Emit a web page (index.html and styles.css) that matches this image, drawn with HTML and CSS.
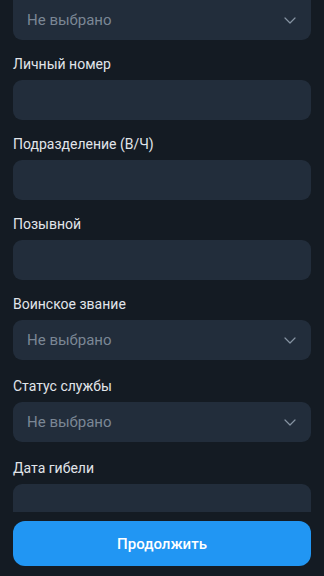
FILE: index.html
```html
<!DOCTYPE html>
<html lang="ru">
<head>
    <meta charset="UTF-8">
    <meta name="viewport" content="width=device-width, initial-scale=1.0">
    <title>Анкета</title>
    <link rel="stylesheet" href="styles.css">
</head>
<body>
    <div class="screen">
        <div class="scroll">
            <form class="form">
                <div class="form-group">
                    <div class="select select-cut">
                        <span class="placeholder">Не выбрано</span>
                        <svg class="chevron" width="12" height="7" viewBox="0 0 12 7"><path d="M1 1l5 5 5-5" fill="none" stroke="currentColor" stroke-width="1.2" stroke-linecap="round" stroke-linejoin="round"/></svg>
                    </div>
                </div>
                <div class="form-group">
                    <label class="label">Личный номер</label>
                    <div class="input"></div>
                </div>
                <div class="form-group">
                    <label class="label">Подразделение (В/Ч)</label>
                    <div class="input"></div>
                </div>
                <div class="form-group">
                    <label class="label">Позывной</label>
                    <div class="input"></div>
                </div>
                <div class="form-group form-group-select">
                    <label class="label">Воинское звание</label>
                    <div class="select">
                        <span class="placeholder">Не выбрано</span>
                        <svg class="chevron" width="12" height="7" viewBox="0 0 12 7"><path d="M1 1l5 5 5-5" fill="none" stroke="currentColor" stroke-width="1.2" stroke-linecap="round" stroke-linejoin="round"/></svg>
                    </div>
                </div>
                <div class="form-group form-group-select">
                    <label class="label">Статус службы</label>
                    <div class="select">
                        <span class="placeholder">Не выбрано</span>
                        <svg class="chevron" width="12" height="7" viewBox="0 0 12 7"><path d="M1 1l5 5 5-5" fill="none" stroke="currentColor" stroke-width="1.2" stroke-linecap="round" stroke-linejoin="round"/></svg>
                    </div>
                </div>
                <div class="form-group">
                    <label class="label">Дата гибели</label>
                    <div class="input"></div>
                </div>
            </form>
        </div>
        <div class="footer">
            <button type="button" class="btn">Продолжить</button>
        </div>
    </div>
</body>
</html>
```

FILE: styles.css
```css
* {
    box-sizing: border-box;
}

html, body {
    margin: 0;
    height: 100%;
}

body {
    background-color: #141b23;
    font-family: Roboto, "Noto Sans", sans-serif;
    color: #e3e7eb;
}

.screen {
    height: 576px;
    display: flex;
    flex-direction: column;
    overflow: hidden;
}

.scroll {
    height: 512px;
    overflow: hidden;
    padding: 0 13px;
}

.form-group {
    margin-bottom: 14px;
}

.form-group-select {
    margin-bottom: 16px;
}

.label {
    display: block;
    font-size: 14px;
    line-height: 20px;
    margin-bottom: 6px;
    color: #e1e5ea;
}

.input,
.select {
    height: 40px;
    background-color: #222d3b;
    border-radius: 9px;
}

.select {
    display: flex;
    align-items: center;
    justify-content: space-between;
    padding: 0 15px 0 14px;
}

.select-cut {
    border-radius: 0 0 9px 9px;
}

.placeholder {
    font-size: 15px;
    color: #7b8795;
}

.chevron {
    color: #8693a2;
}

.footer {
    flex: 1;
    padding: 9px 13px 0;
    background-color: #141b23;
}

.btn {
    width: 100%;
    height: 45px;
    border: none;
    border-radius: 12px;
    background-color: #2196f3;
    color: #fff;
    font-family: Roboto, "Noto Sans", sans-serif;
    font-size: 15px;
    font-weight: 500;
    cursor: pointer;
}
```
